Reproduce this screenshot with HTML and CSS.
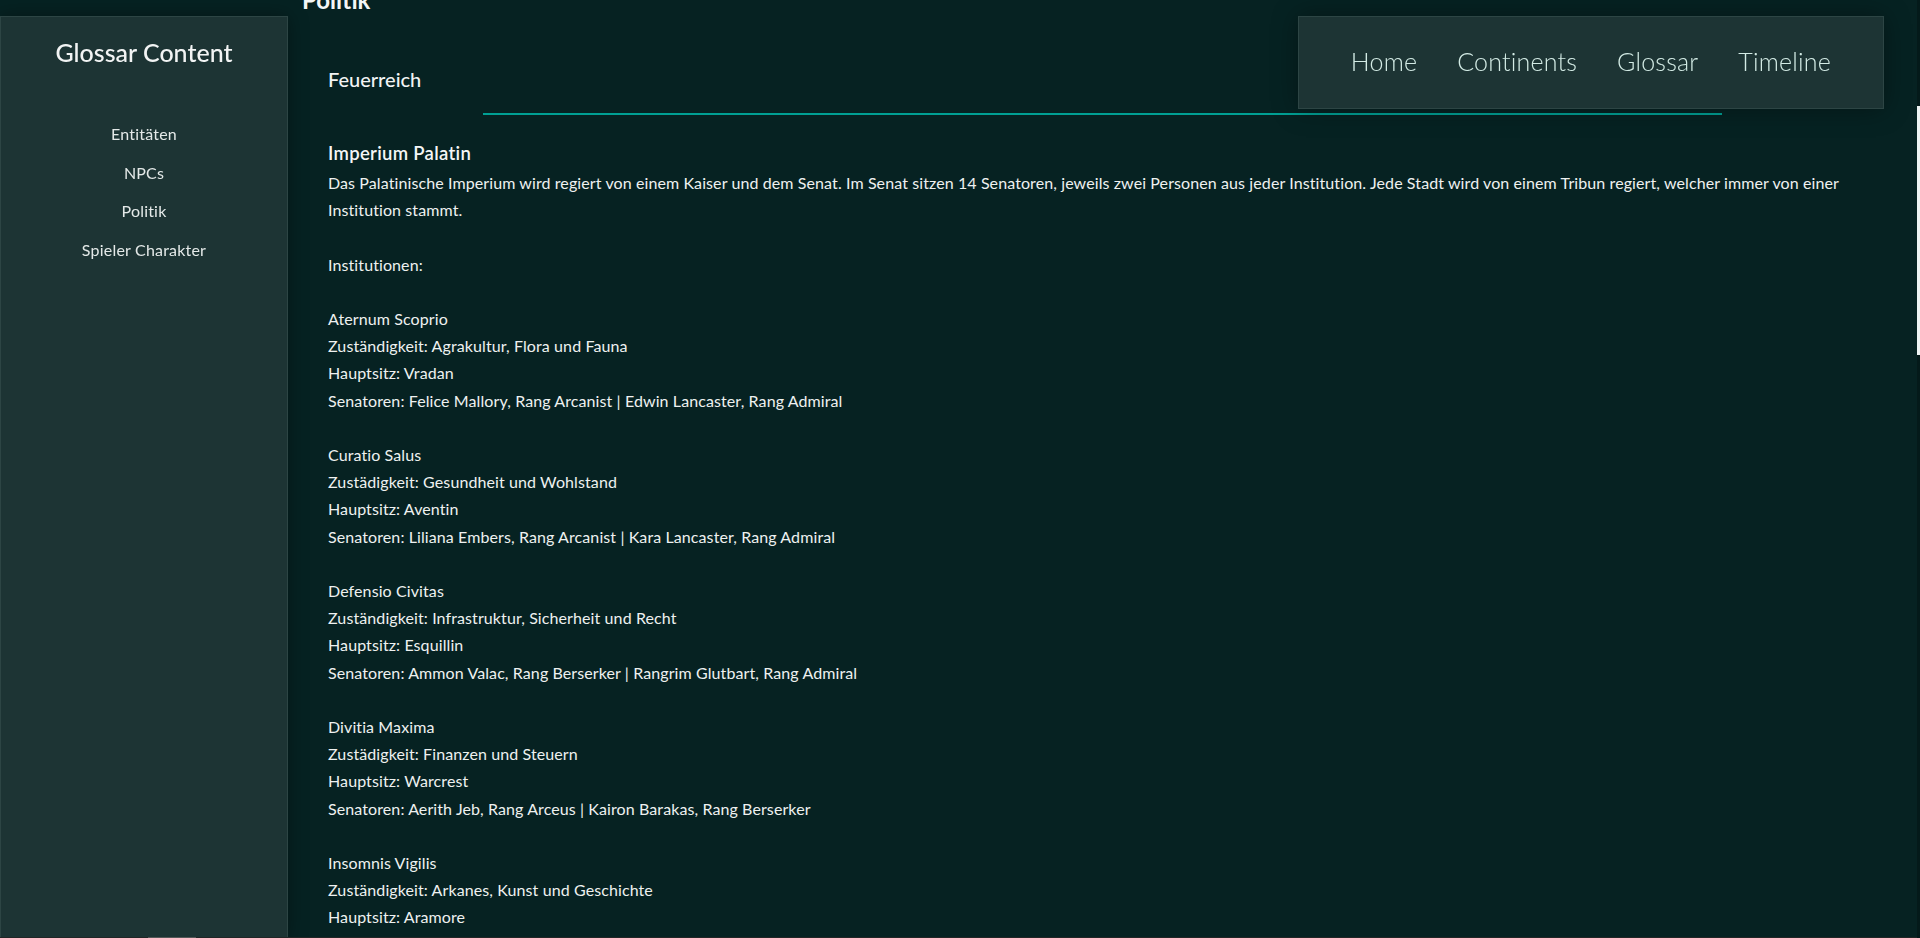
FILE: index.html
```html
<!DOCTYPE html>
<html lang="de">
<head>
<meta charset="utf-8">
<title>Glossar – Politik</title>
<link rel="stylesheet" href="styles.css">
</head>
<body>
<aside class="sidebar">
  <h2 class="sidebar-title">Glossar Content</h2>
  <ul class="sidebar-links">
    <li><a href="#">Entitäten</a></li>
    <li><a href="#">NPCs</a></li>
    <li><a href="#">Politik</a></li>
    <li><a href="#">Spieler Charakter</a></li>
  </ul>
</aside>

<nav class="topnav">
  <a href="#">Home</a>
  <a href="#">Continents</a>
  <a href="#">Glossar</a>
  <a href="#">Timeline</a>
</nav>

<main class="content">
  <h1 class="page-title">Politik</h1>
  <section class="region">
    <div class="region-tab">Feuerreich</div>
    <hr class="divider">
    <article class="entry">
      <h3 class="entry-title">Imperium Palatin</h3>
      <p class="entry-text">Das Palatinische Imperium wird regiert von einem Kaiser und dem Senat. Im Senat sitzen 14 Senatoren, jeweils zwei Personen aus jeder Institution. Jede Stadt wird von einem Tribun regiert, welcher immer von einer Institution stammt.<br><br>Institutionen:<br><br>Aternum Scoprio<br>Zuständigkeit: Agrakultur, Flora und Fauna<br>Hauptsitz: Vradan<br>Senatoren: Felice Mallory, Rang Arcanist | Edwin Lancaster, Rang Admiral<br><br>Curatio Salus<br>Zustädigkeit: Gesundheit und Wohlstand<br>Hauptsitz: Aventin<br>Senatoren: Liliana Embers, Rang Arcanist | Kara Lancaster, Rang Admiral<br><br>Defensio Civitas<br>Zuständigkeit: Infrastruktur, Sicherheit und Recht<br>Hauptsitz: Esquillin<br>Senatoren: Ammon Valac, Rang Berserker | Rangrim Glutbart, Rang Admiral<br><br>Divitia Maxima<br>Zustädigkeit: Finanzen und Steuern<br>Hauptsitz: Warcrest<br>Senatoren: Aerith Jeb, Rang Arceus | Kairon Barakas, Rang Berserker<br><br>Insomnis Vigilis<br>Zuständigkeit: Arkanes, Kunst und Geschichte<br>Hauptsitz: Aramore</p>
    </article>
  </section>
</main>

<div class="vscroll" aria-hidden="true"><div class="vscroll-thumb"></div></div>
<div class="hscroll" aria-hidden="true"><div class="hscroll-thumb"></div></div>
<script src="script.js"></script>
</body>
</html>
```
FILE: styles.css
```css
html {
  background: #062222;
}
body {
  margin: 0;
  background: #062222;
  color: #eef1f0;
  font-family: Lato, "Open Sans", sans-serif;
}
a {
  color: inherit;
  text-decoration: none;
}

.sidebar {
  position: fixed;
  top: 16px;
  left: 0;
  bottom: 0;
  width: 288px;
  box-sizing: border-box;
  background: #1d3434;
  border: 1px solid #2d4544;
  border-bottom: none;
  box-shadow: 0 0 18px rgba(0, 0, 0, 0.35);
  text-align: center;
  z-index: 2;
}
.sidebar-title {
  margin: 21px 0 0;
  font-size: 25px;
  font-weight: 500;
  line-height: 29px;
  color: #f2f4f4;
}
.sidebar-links {
  list-style: none;
  margin: 48px 0 0;
  padding: 0;
}
.sidebar-links li {
  padding: 8px 0;
  line-height: 22.5px;
  font-size: 16px;
  letter-spacing: 0.2px;
  color: #e4e9e8;
}

.topnav {
  position: fixed;
  top: 16px;
  right: 36px;
  height: 93px;
  box-sizing: border-box;
  display: flex;
  align-items: center;
  padding: 0 32px 4px;
  background: #1d3434;
  border: 1px solid #2d4544;
  box-shadow: 0 0 24px rgba(0, 0, 0, 0.35);
  z-index: 2;
}
.topnav a {
  padding: 0 20px;
  font-size: 25px;
  font-weight: 300;
  letter-spacing: 0.2px;
  color: #d3ebe5;
}

.content {
  margin-left: 288px;
  padding: 385px 17px 0 14px;
  min-height: 3533px;
  box-sizing: border-box;
}
.page-title {
  margin: 0;
  font-size: 24px;
  font-weight: 700;
  line-height: 29px;
  color: #f4f6f6;
}
.region {
  padding: 0 26px;
}
.region-tab {
  margin-top: 53px;
  font-size: 20px;
  font-weight: 500;
  line-height: 24px;
  color: #f2f4f4;
}
.divider {
  width: 80%;
  margin: 22px auto 0;
  border: none;
  height: 2px;
  background: #00a094;
}
.entry-title {
  margin: 28px 0 0;
  font-size: 18.5px;
  font-weight: 600;
  letter-spacing: 0.3px;
  line-height: 21px;
  color: #f4f6f6;
}
.entry-text {
  margin: 5px 0 0;
  font-size: 16px;
  letter-spacing: 0.1px;
  line-height: 27.2px;
  color: #eef1f0;
}

.vscroll {
  position: fixed;
  top: 0;
  right: 0;
  bottom: 0;
  width: 3px;
  background: #041a1a;
  z-index: 3;
}
.vscroll-thumb {
  margin-top: 106px;
  height: 249px;
  background: #eef3f3;
}
.hscroll {
  position: fixed;
  left: 0;
  right: 3px;
  bottom: 0;
  height: 1px;
  background: #222626;
  z-index: 3;
}
.hscroll-thumb {
  margin-left: 148px;
  width: 48px;
  height: 1px;
  background: #555858;
}
```
FILE: script.js
```js
window.scrollTo(0, 400);
```
